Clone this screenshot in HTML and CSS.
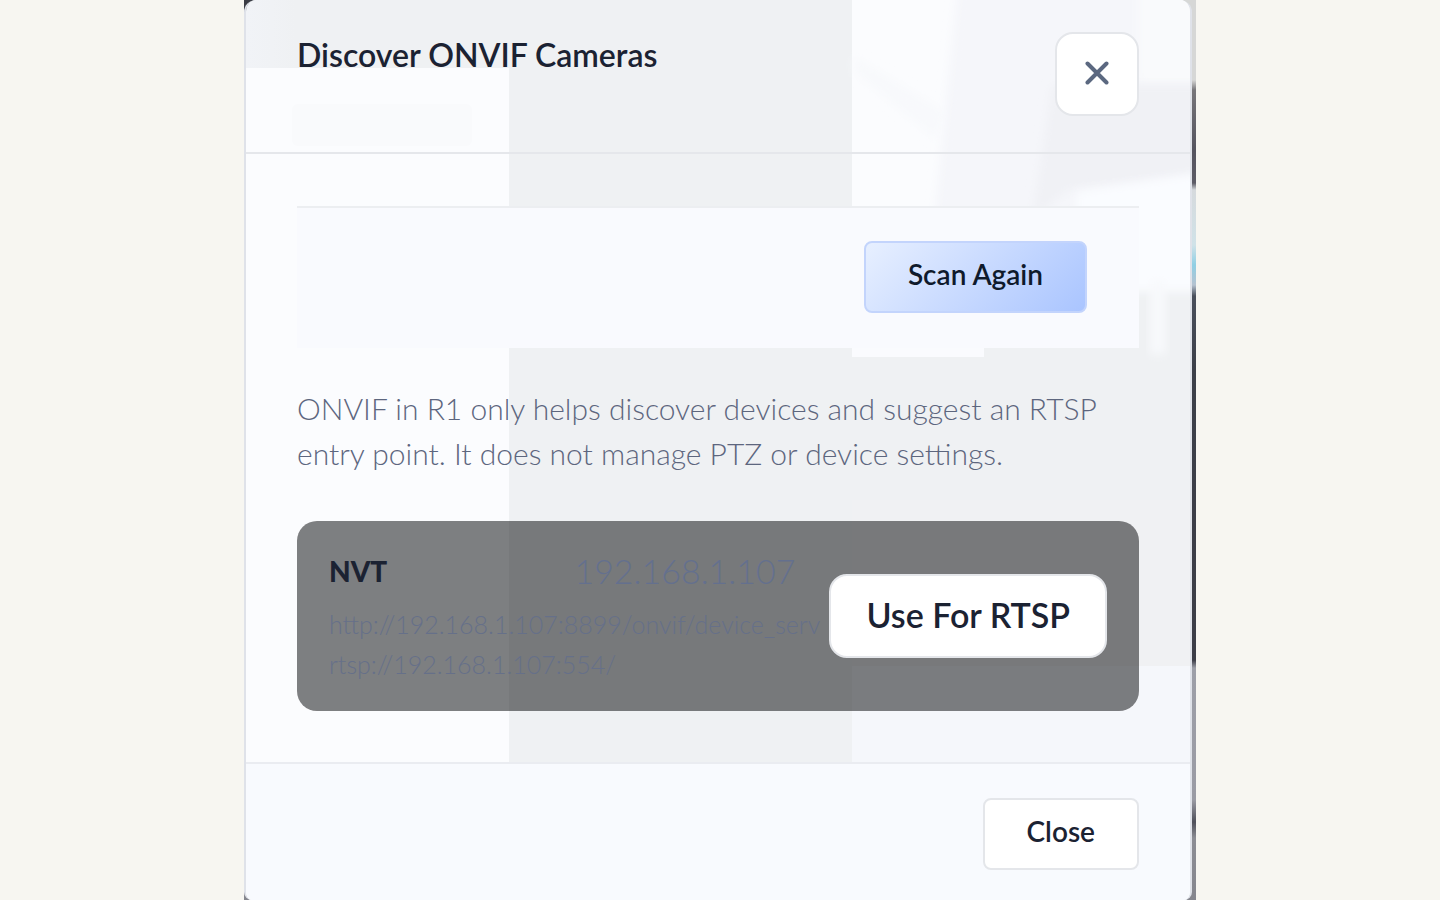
FILE: index.html
```html
<!DOCTYPE html>
<html lang="en">
<head>
<meta charset="utf-8">
<title>Discover ONVIF Cameras</title>
<link rel="stylesheet" href="styles.css">
</head>
<body>
<div class="stage">
  <section class="dialog" role="dialog" aria-labelledby="dialog-title">
    <svg class="backdrop" viewBox="0 0 944 900" preserveAspectRatio="none" aria-hidden="true">
      <defs>
        <filter id="soft" x="-20%" y="-20%" width="140%" height="140%"><feGaussianBlur stdDeviation="5"/></filter>
        <linearGradient id="edge"><stop offset="0" stop-color="#f1f3f7"/><stop offset="1" stop-color="#eff1f3"/></linearGradient>
      </defs>
      <rect width="944" height="900" fill="#eff1f3"/>
      <rect width="50" height="68" fill="url(#edge)"/>
      <rect y="68" width="263" height="832" fill="#fbfcfe"/>
      <rect x="46" y="104" width="180" height="42" rx="6" fill="#f9fafc"/>
      <rect x="606" width="338" height="280" fill="#fbfcfe"/>
      <rect x="606" y="280" width="132" height="77" fill="#fafbfe"/>
      <path d="M712 -20H960V240H686Z" fill="#f5f6fa" filter="url(#soft)"/>
      <path d="M892 -20H960V84H892Z" fill="#f9fafc" filter="url(#soft)"/>
      <path d="M608 56L700 112L690 140L608 72Z" fill="#f8f9fc" filter="url(#soft)"/>
      <path d="M806 85H960V175L822 190L786 220Z" fill="#f0f1f5" filter="url(#soft)"/>
      <path d="M830 192L960 172V292H830Z" fill="#fafcff" filter="url(#soft)"/>
      <rect x="904" y="280" width="16" height="74" fill="#f8f9fc" filter="url(#soft)"/>
      <rect x="606" y="500" width="338" height="166" fill="#f0f1f3"/>
      <rect x="606" y="666" width="338" height="234" fill="#f5f7fb"/>
    </svg>
    <header class="header">
      <h1 class="title" id="dialog-title">Discover ONVIF Cameras</h1>
      <button class="btn icon-btn" type="button" aria-label="Dismiss">
        <svg class="cross" viewBox="0 0 24 24" aria-hidden="true"><path d="M2.500 2.500L21.500 21.500M21.500 2.500L2.500 21.500"/></svg>
      </button>
    </header>
    <div class="body">
      <div class="toolbar">
        <button class="btn primary" type="button">Scan Again</button>
      </div>
      <p class="note">ONVIF in R1 only helps discover devices and suggest an RTSP entry point. It does not manage PTZ or device settings.</p>
      <article class="device">
        <div class="info">
          <div class="device-head">
            <strong class="name">NVT</strong>
            <span class="ip">192.168.1.107</span>
          </div>
          <div class="url">http://192.168.1.107:8899/onvif/device_serv</div>
          <div class="url">rtsp://192.168.1.107:554/</div>
        </div>
        <button class="btn use" type="button">Use For RTSP</button>
      </article>
    </div>
    <footer class="footer">
      <button class="btn" type="button">Close</button>
    </footer>
  </section>
</div>
</body>
</html>
```
FILE: styles.css
```css
* { box-sizing: border-box; }

body {
  margin: 0;
  background: #f7f6f1;
  color: #1b2232;
  font-family: Lato, "Liberation Sans", sans-serif;
}

.stage {
  max-width: 952px;
  min-height: 100vh;
  margin: 0 auto;
  padding-right: 4px;
  display: flex;
  background:
    linear-gradient(#3a3c44, #3a3c44) 0 0 / 12px 12px no-repeat,
    linear-gradient(#d6d7d6 0, #d6d7d6 80px, #77767a 90px, #55545f 150px, #5d5c66 183px, #d6dadd 190px, #d0e2e8 245px, #8fcfe4 265px, #b5c2d0 285px, #4a505c 296px, #3c3f49 370px, #3c3d47 660px, #9d9fa8 668px, #9a9ba4 800px, #4f505a 822px, #8c8d94 838px, #85868e 100%);
}

.dialog {
  position: relative;
  z-index: 0;
  flex: 1;
  min-width: 0;
  display: flex;
  flex-direction: column;
  overflow: hidden;
  border: solid #dfe2e9;
  border-width: 0 2px;
  border-radius: 12px 12px 8px 8px;
}

.backdrop {
  position: absolute;
  inset: 0;
  width: 100%;
  height: 100%;
  z-index: -1;
}

.header {
  display: flex;
  justify-content: space-between;
  align-items: flex-start;
  padding: 32px 51px 36px;
  border-bottom: 2px solid #e5e7eb;
}

.title {
  margin: 0;
  font-size: 32px;
  line-height: 46px;
  font-weight: 600;
}

.btn {
  height: 72px;
  padding: 0 42px 6px;
  border: 2px solid #e4e6ea;
  border-radius: 8px;
  background: #fff;
  color: #1b2232;
  font-family: inherit;
  font-size: 28px;
  font-weight: 600;
  white-space: nowrap;
}

.icon-btn {
  width: 84px;
  height: 84px;
  padding: 0 0 3px;
  border-radius: 18px;
  display: grid;
  place-items: center;
}

.cross {
  width: 24px;
  height: 24px;
  fill: none;
  stroke: #5b6880;
  stroke-width: 4;
  stroke-linecap: round;
}

.body {
  flex: 1;
  padding: 52px 51px 51px;
}

.toolbar {
  display: flex;
  justify-content: flex-end;
  padding: 33px 52px 35px;
  border-top: 2px solid #eceef1;
  background: #f9fafe;
}

.primary {
  border-color: #c3d4fc;
  background: linear-gradient(135deg, #e8f0ff, #a9c4ff) border-box;
  color: #0f1a2c;
}

.note {
  margin: 38px 0 45px;
  color: #5d667e;
  font-size: 30px;
  font-weight: 300;
  line-height: 45px;
}

.device {
  display: flex;
  align-items: center;
  min-height: 190px;
  padding: 16px 32px 20px;
  border-radius: 20px;
  background: rgba(0, 2, 4, 0.5);
}

.info {
  flex: 1;
  min-width: 0;
}

.device-head {
  display: flex;
  align-items: center;
  justify-content: space-between;
  margin-bottom: 6px;
  padding-right: 34px;
  line-height: 54px;
}

.name {
  font-size: 28px;
  font-weight: 900;
}

.ip {
  color: #64708e;
  font-size: 34px;
  font-weight: 300;
}

.url {
  color: #667089;
  font-size: 25px;
  font-weight: 300;
  line-height: 40px;
  white-space: nowrap;
}

.use {
  height: 84px;
  margin-top: 4px;
  padding: 0 35px 4px;
  border-radius: 18px;
  font-size: 34px;
}

.footer {
  display: flex;
  justify-content: flex-end;
  padding: 34px 51px 30px;
  border-top: 2px solid #eaecf1;
  background: #f8fafe;
}
```
